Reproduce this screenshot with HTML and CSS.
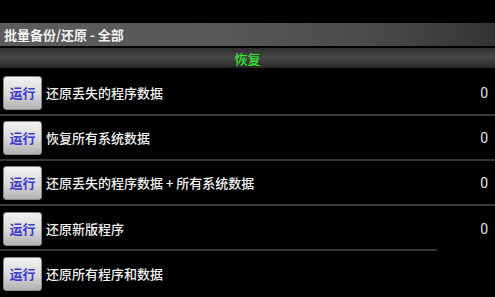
FILE: index.html
```html
<!DOCTYPE html>
<html lang="zh-CN">
<head>
<meta charset="utf-8">
<title>批量备份/还原</title>
<link rel="stylesheet" href="styles.css">
</head>
<body>
<div class="screen">
  <div class="topgap"></div>
  <div class="titlebar">批量备份/还原 - 全部</div>
  <div class="section">恢复</div>
  <ul class="list">
    <li class="row"><button class="run">运行</button><span class="label">还原丢失的程序数据</span><span class="count">0</span></li>
    <li class="row"><button class="run">运行</button><span class="label">恢复所有系统数据</span><span class="count">0</span></li>
    <li class="row"><button class="run">运行</button><span class="label">还原丢失的程序数据 + 所有系统数据</span><span class="count">0</span></li>
    <li class="row short"><button class="run">运行</button><span class="label">还原新版程序</span><span class="count">0</span></li>
    <li class="row last"><button class="run">运行</button><span class="label">还原所有程序和数据</span><span class="count"></span></li>
  </ul>
</div>
</body>
</html>
```

FILE: styles.css
```css
* { box-sizing: border-box; }
html, body {
  margin: 0;
  padding: 0;
  background: #000;
}
body {
  width: 495px;
  height: 297px;
  overflow: hidden;
  font-family: "Noto Sans CJK SC", "Noto Sans", "DejaVu Sans", sans-serif;
  color: #fff;
}
.screen {
  display: flex;
  flex-direction: column;
  height: 297px;
}
.topgap {
  height: 23px;
  background: #000;
}
.titlebar {
  height: 23px;
  padding-left: 4px;
  display: flex;
  align-items: center;
  font-size: 13px;
  font-weight: 700;
  color: #f4f4f4;
  background: linear-gradient(to right, #5c5c5c 0%, #575757 45%, #4a4a4a 75%, #333 100%);
}
.section {
  margin-top: 2px;
  height: 20px;
  display: flex;
  align-items: center;
  justify-content: center;
  font-size: 13px;
  font-weight: 500;
  color: #33e633;
  background: linear-gradient(#2e2e2e, #464646 45%, #363636 80%, #242424);
}
.list {
  list-style: none;
  margin: 0;
  padding: 0;
  padding-top: 3px;
}
.row {
  height: 45px;
  display: flex;
  align-items: center;
  padding: 0 7px 0 3px;
  border-bottom: 2px solid #363636;
}
.row.short {
  border-bottom: none;
  background: linear-gradient(#363636, #363636) no-repeat 0 100% / 437px 2px;
}
.row.last {
  border-bottom: none;
}
.run {
  width: 39px;
  height: 34px;
  margin: 0;
  padding: 0;
  border: 1px solid #8a8a8a;
  border-radius: 3px;
  background: linear-gradient(#f2f2f2, #dadada 50%, #b2b2b2);
  color: #3b3bcc;
  font-family: "Noto Sans CJK SC", sans-serif;
  font-size: 13px;
  font-weight: 700;
}
.label {
  flex: 1;
  margin-left: 4px;
  font-size: 13px;
  font-weight: 500;
  color: #f2f2f2;
}
.count {
  font-family: "Roboto", "DejaVu Sans", sans-serif;
  font-size: 14px;
  color: #e4e4e4;
}
```
